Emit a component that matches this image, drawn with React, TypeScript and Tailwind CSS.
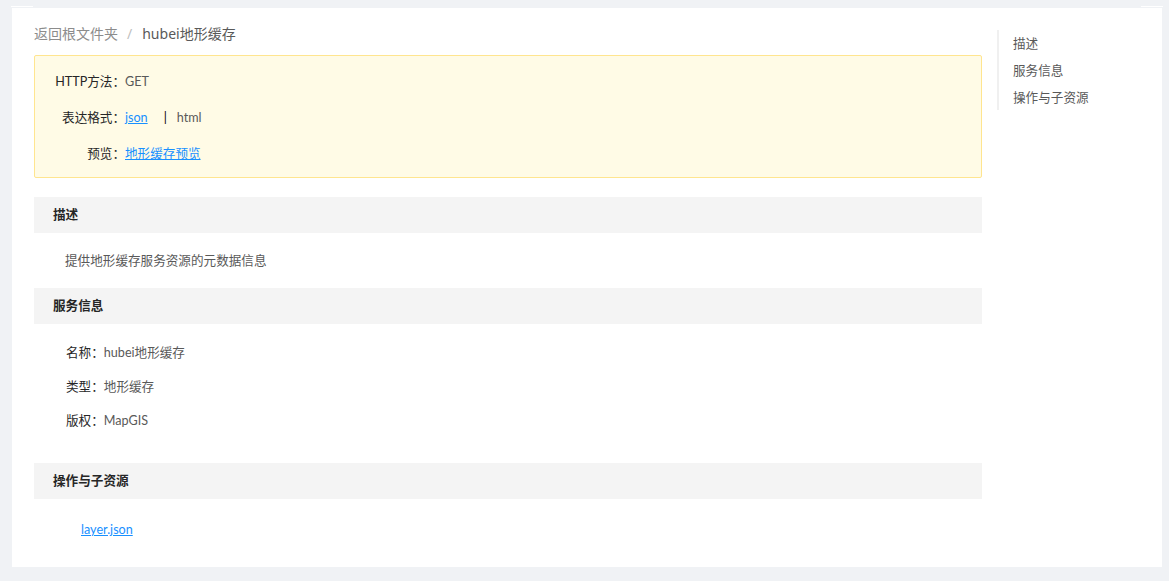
const FONT = { fontFamily: '"Noto Sans", "Noto Sans CJK SC", sans-serif' };
const BODY = { fontFamily: 'Lato, "Noto Sans CJK SC", sans-serif' };

function SectionHeader({ title }: { title: string }) {
  return (
    <div className="flex h-[36px] items-center bg-[#f4f4f4] pl-[19px] text-[12.6px] font-bold text-[#262626]">
      {title}
    </div>
  );
}

function InfoRow({ label, value }: { label: string; value: string }) {
  return (
    <div className="flex h-[34px] items-center text-[12.6px]">
      <span className="text-[#262626]">{label}：</span>
      <span className="text-[#595959]">{value}</span>
    </div>
  );
}

function AlertRow({ label, children }: { label: string; children: React.ReactNode }) {
  return (
    <div className="flex leading-[22px]">
      <span className="w-[90px] text-right text-[#262626]">{label}：</span>
      <span className="flex text-[#595959]">{children}</span>
    </div>
  );
}

export default function App() {
  return (
    <div className="h-[581px] bg-[#f0f2f5] pl-[12px] pr-[7px] pt-[6px]" style={FONT}>
      <div className="flex h-px justify-between">
        <div className="-ml-px w-[22px] bg-white" />
        <div className="-mr-px w-[22px] bg-white" />
      </div>
      <div className="mt-px flex h-[559px] bg-white pl-[22px] pt-[15px]">
        <div className="flex w-[948px] flex-col">
          <div className="flex text-[14px] leading-[22px]">
            <span className="text-[#8c8c8c]">返回根文件夹</span>
            <span className="mx-[9px] text-[#bfbfbf]">/</span>
            <span className="ml-[1px] text-[#595959]">hubei地形缓存</span>
          </div>

          <div style={BODY}>
            <div className="mt-[10px] flex flex-col gap-[14px] rounded-[2px] border border-[#ffe58f] bg-[#fffbe6] pb-[12px] pt-[15px] text-[12.6px]">
              <AlertRow label="HTTP方法">GET</AlertRow>
              <AlertRow label="表达格式">
                <a href="#" className="text-[#1890ff] underline">
                  json
                </a>
                <span className="ml-[16px] mr-[10px] text-black">|</span>
                <span>html</span>
              </AlertRow>
              <AlertRow label="预览">
                <a href="#" className="text-[#1890ff] underline">
                  地形缓存预览
                </a>
              </AlertRow>
            </div>

            <div className="mt-[19px]">
              <SectionHeader title="描述" />
              <p className="pb-[16px] pl-[31px] pt-[17px] text-[12.6px] leading-[22px] text-[#595959]">
                提供地形缓存服务资源的元数据信息
              </p>
            </div>

            <div>
              <SectionHeader title="服务信息" />
              <div className="pl-[32px] pt-[12px]">
                <InfoRow label="名称" value="hubei地形缓存" />
                <InfoRow label="类型" value="地形缓存" />
                <InfoRow label="版权" value="MapGIS" />
              </div>
            </div>

            <div className="mt-[25px]">
              <SectionHeader title="操作与子资源" />
              <div className="pl-[47px] pt-[20px] text-[12.6px] leading-[22px]">
                <a href="#" className="text-[#1890ff] underline">
                  layer.json
                </a>
              </div>
            </div>
          </div>
        </div>

        <nav className="ml-[15px] mt-[7px] flex h-[80px] flex-col border-l-2 border-[#f0f0f0] pl-[14px] text-[12.6px] text-[#595959]">
          <a href="#" className="leading-[27px]">描述</a>
          <a href="#" className="leading-[27px]">服务信息</a>
          <a href="#" className="leading-[27px]">操作与子资源</a>
        </nav>
      </div>
    </div>
  );
}
